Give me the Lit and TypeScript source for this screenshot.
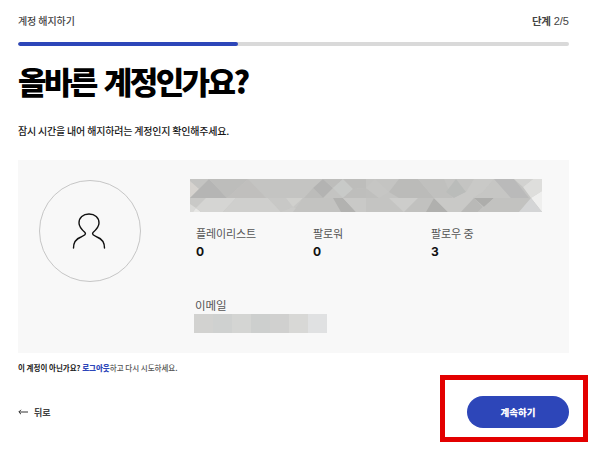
import { LitElement, html, css, svg } from "lit";
import { customElement } from "lit/decorators.js";

const FONT = `"Noto Sans CJK KR", "Noto Sans", sans-serif`;
const fam = css([FONT] as any as TemplateStringsArray);

@customElement("app-root")
export class AppRoot extends LitElement {
  static styles = css`
    :host {
      display: block;
      position: relative;
      width: 600px;
      height: 453px;
      overflow: hidden;
      background: #fff;
      font-family: ${fam};
      color: #181818;
    }
    .page { padding: 13px 31px 0 18px; display: flex; flex-direction: column; }
    .top { display: flex; justify-content: space-between; align-items: center; height: 14px; font-size: 10px; color: #444; font-weight: 500; letter-spacing: -.1px; }
    .step { color: #444; font-family: "Liberation Sans", ${fam}; font-size: 11px; letter-spacing: 0; }
    .step b { font-weight: 700; font-family: ${fam}; font-size: 10.5px; letter-spacing: -.3px; }
    .bar { height: 4px; margin-top: 15px; background: #d9d9d9; border-radius: 2px; overflow: hidden; }
    .fill { height: 100%; background: #2d46b9; border-radius: 2px; }
    h1 { margin: 12px 0 0; font-size: 31px; line-height: 46px; font-weight: 900; color: #000; letter-spacing: -2.6px; word-spacing: 3.6px; }
    .sub { margin: 19px 0 0; font-size: 10px; line-height: 16px; font-weight: 500; color: #181818; letter-spacing: -.2px; }
    .card { margin-top: 21px; height: 193px; background: #f8f8f8; display: flex; box-sizing: border-box; padding: 19px 27px 0 21px; }
    .avatar { width: 102px; height: 102px; box-sizing: border-box; margin-top: 1px; border: 1.5px solid #c6c6c6; border-radius: 50%; display: flex; align-items: center; justify-content: center; flex: none; }
    .avatar svg { width: 36px; height: 38px; display: block; }
    .info { margin-left: 49px; flex: 1; min-width: 0; }
    .name { display: block; width: 352px; height: 33px; }
    .stats { display: grid; grid-template-columns: 117px 118px 1fr; padding-left: 6px; margin-top: 13px; }
    .label { font-size: 11px; line-height: 17px; color: #555; letter-spacing: -.1px; }
    .value { font-size: 12px; line-height: 18px; font-weight: 700; color: #111; font-family: "Inter", sans-serif; margin-top: 1px; }
    .email { margin: 36px 0 0 5px; }
    .email .label { font-size: 11.5px; line-height: 17px; }
    .mask { display: flex; width: 133px; height: 19px; margin-left: -1px; }
    .mask i { flex: 1; }
    .note { margin: 7px 0 0; font-size: 7.5px; line-height: 15px; color: #555; font-weight: 500; }
    .note b { color: #222; font-weight: 700; }
    .note a { color: #2d46b9; font-weight: 900; text-decoration: none; }
    .actions { margin-top: 21px; display: flex; align-items: center; justify-content: space-between; height: 32px; }
    .back { display: flex; align-items: center; gap: 6px; font-size: 9px; font-weight: 700; color: #444; }
    .back svg { width: 10px; height: 6px; display: block; }
    .cta { width: 102px; height: 32px; border: 0; border-radius: 16px; background: #2d46b9; color: #fff; font: 900 9.5px ${fam}; padding: 0; }
    .mark { position: absolute; left: 440px; top: 375px; width: 148px; height: 67px; box-sizing: border-box; border: 5px solid #e30000; pointer-events: none; }
  `;

  private nameArt() {
    const shapes: [string, string][] = [
      ["0,0 352,0 352,19 0,19", "#c4c4c2"],
      ["0,19 352,19 352,33 0,33", "#c7c7c5"],
      // upper band, left half
      ["0,0 19,0 9,10 0,2", "#c4c4c2"],
      ["0,2 9,10 0,19", "#d6d3cf"],
      ["9,10 19,0 37,19 0,19", "#b5b5b4"],
      ["19,0 58,0 37,19", "#bdbdbb"],
      ["58,0 76,19 37,19", "#c0bfbd"],
      ["114,19 133,19 123,9", "#bcbcba"],
      ["133,0 143,9 133,19 123,9", "#b3b3b2"],
      ["133,0 153,0 143,9", "#bdbdbb"],
      ["153,0 163,10 153,19 143,9", "#c8cac8"],
      ["153,0 176,0 176,9 163,10", "#bdbdbb"],
      ["163,10 176,9 176,19 153,19", "#bebebc"],
      // upper band, right half
      ["176,9 189,19 176,19", "#bfbfbd"],
      ["176,9 185,0 199,13 189,19", "#c6c6c4"],
      ["199,13 209,0 228,0 244,19 209,19", "#bbbbb9"],
      ["228,0 254,0 262,19 244,19", "#c0c0be"],
      ["256,13 266,0 276,13 264,19", "#babcba"],
      ["276,13 284,0 304,0 293,13 283,19 264,19", "#c9c9c7"],
      ["293,13 304,0 321,19 283,19", "#c6c6c4"],
      ["304,0 324,0 339,19 321,19", "#bababa"],
      ["324,0 343,0 333,8", "#d2d2d0"],
      ["333,8 343,0 352,0 352,12 341,19", "#dededc"],
      ["341,19 352,12 352,33", "#efefee"],
      // lower band, left half
      ["0,19 16,19 6,29 0,25", "#c9c9c7"],
      ["0,25 6,29 3,33 0,33", "#dadad8"],
      ["3,33 6,29 11,33", "#e8e8e6"],
      ["16,19 46,19 33,33 11,33 6,29", "#d5d5d3"],
      ["46,19 78,19 91,33 33,33", "#cfcfcd"],
      ["78,19 96,19 103,28 91,33", "#c8c8c6"],
      ["96,19 113,19 103,28", "#d0d0cd"],
      ["91,33 103,28 113,33", "#cbcbc9"],
      ["113,19 143,19 157,33 103,33", "#c3c3c1"],
      ["143,19 153,19 166,33 151,33", "#b2b2b0"],
      ["153,19 176,19 176,33 166,33", "#c9c9c7"],
      // lower band, right half
      ["176,19 199,19 213,33 176,33", "#c4c4c2"],
      ["199,19 228,19 214,33", "#cdcdcb"],
      ["228,19 244,19 258,33 214,33", "#c1c1bf"],
      ["244,19 258,33 236,33", "#b0b0ae"],
      ["244,19 284,19 271,33 258,33", "#c9c9c7"],
      ["271,33 284,19 293,28 288,33", "#b9b9b7"],
      ["284,19 304,19 294,28", "#adadab"],
      ["304,19 341,19 329,33 288,33 294,28", "#c2c2c0"],
      ["341,19 352,33 329,33", "#d4d5d6"],
    ];
    return svg`${shapes.map(([p, f]) => svg`<polygon points=${p} fill=${f}></polygon>`)}`;
  }

  render() {
    const swatches = ["#d2d2d0", "#cfd1d0", "#d4d5d3", "#cdcfce", "#d0d0cf", "#d8d8d6", "#e0e1e2"];
    return html`
      <div class="page">
        <div class="top"><span>계정 해지하기</span><span class="step"><b>단계</b> 2/5</span></div>
        <div class="bar"><div class="fill" style="width:40%"></div></div>
        <h1>올바른 계정인가요?</h1>
        <p class="sub">잠시 시간을 내어 해지하려는 계정인지 확인해주세요.</p>
        <section class="card">
          <div class="avatar">
            <svg viewBox="0 0 36 38" fill="none" stroke="#111" stroke-width="1.4" stroke-linecap="round" stroke-linejoin="round">
              <path d="M1.500 36C1.500 30 5 26.500 9 25 12 23.500 14.500 22.500 13 20.500 9 17 7 14.500 7 11 7 5.500 11 2 17 2S27 5.500 27 11C27 14.500 25 17 21 20.500 19.500 22.500 22 23.500 25 25 29 26.500 32.500 30 32.500 36"></path>
            </svg>
          </div>
          <div class="info">
            <svg class="name" viewBox="0 0 352 33" preserveAspectRatio="none" aria-hidden="true">${this.nameArt()}</svg>
            <div class="stats">
              <div><div class="label">플레이리스트</div><div class="value">0</div></div>
              <div><div class="label">팔로워</div><div class="value">0</div></div>
              <div><div class="label">팔로우 중</div><div class="value">3</div></div>
            </div>
            <div class="email">
              <div class="label">이메일</div>
              <div class="mask">${swatches.map((c) => html`<i style="background:${c}"></i>`)}</div>
            </div>
          </div>
        </section>
        <p class="note"><b>이 계정이 아닌가요?</b> <a href="#">로그아웃</a>하고 다시 시도하세요.</p>
        <div class="actions">
          <div class="back">
            <svg viewBox="0 0 10 6" fill="none" stroke="#333" stroke-width="1"><path d="M10 3H1M3 .8 .8 3 3 5.200"></path></svg>
            <span>뒤로</span>
          </div>
          <button class="cta">계속하기</button>
        </div>
      </div>
      <div class="mark"></div>
    `;
  }
}
